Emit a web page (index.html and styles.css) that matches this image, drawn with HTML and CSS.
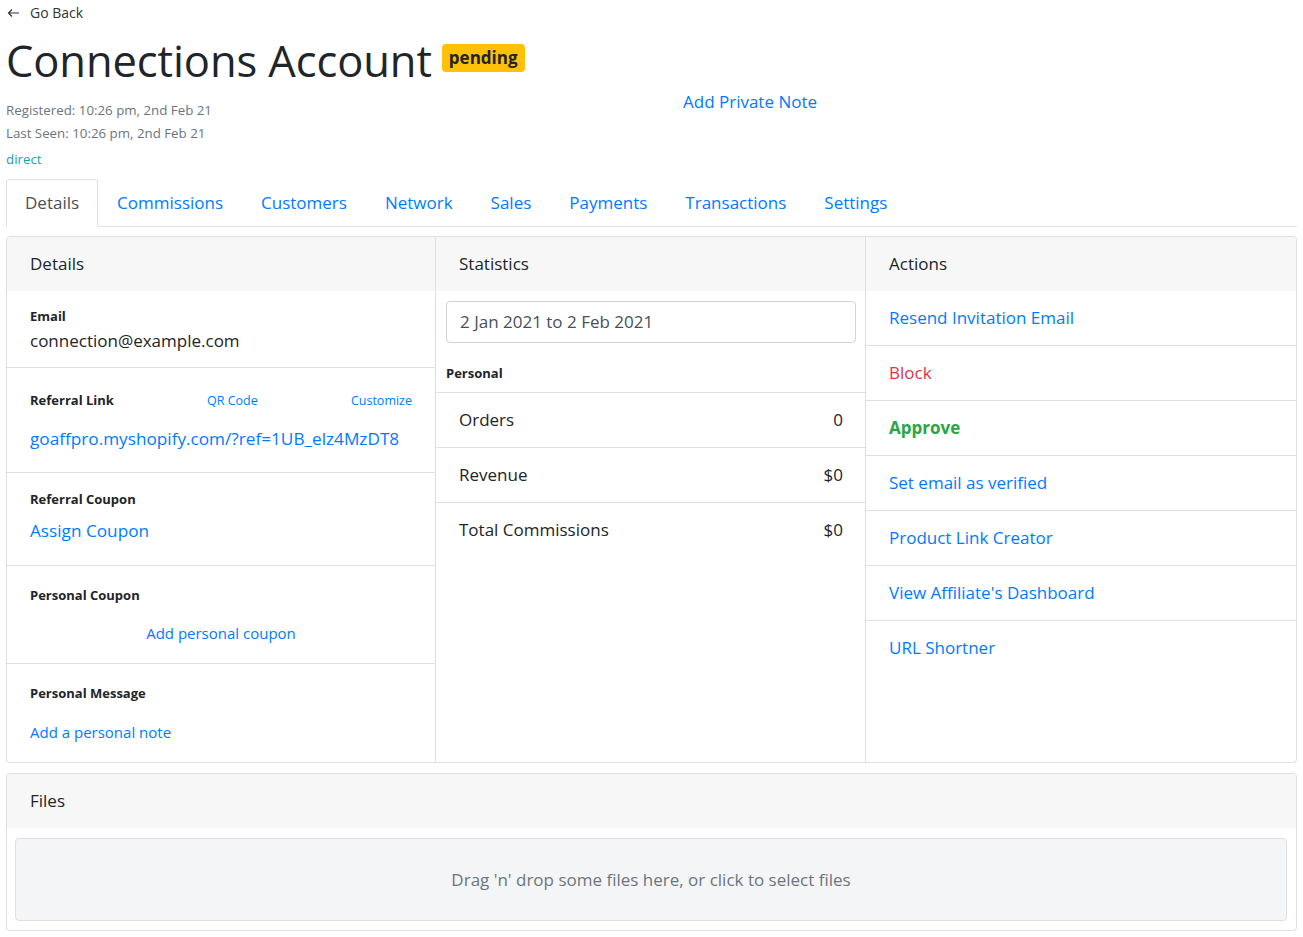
FILE: index.html
```html
<!DOCTYPE html>
<html lang="en">
<head>
<meta charset="utf-8">
<title>Connections Account</title>
<link rel="stylesheet" href="styles.css">
</head>
<body>
<div class="page">
  <a class="go-back" href="#">
    <svg class="arrow" width="13" height="10" viewBox="0 0 13 10" aria-hidden="true"><path d="M12 5H1.5M5 1.5L1.5 5L5 8.5" fill="none" stroke="#333" stroke-width="1.2"/></svg>
    <span>Go Back</span>
  </a>

  <div class="header">
    <div class="header-left">
      <div class="title-row">
        <h1 class="title">Connections Account</h1>
        <span class="badge">pending</span>
      </div>
      <div class="meta">Registered: 10:26 pm, 2nd Feb 21</div>
      <div class="meta">Last Seen: 10:26 pm, 2nd Feb 21</div>
      <div class="source">direct</div>
    </div>
    <a class="private-note" href="#">Add Private Note</a>
  </div>

  <nav class="tabs">
    <a class="tab active" href="#">Details</a>
    <a class="tab" href="#">Commissions</a>
    <a class="tab" href="#">Customers</a>
    <a class="tab" href="#">Network</a>
    <a class="tab" href="#">Sales</a>
    <a class="tab" href="#">Payments</a>
    <a class="tab" href="#">Transactions</a>
    <a class="tab" href="#">Settings</a>
  </nav>

  <div class="card-group">
    <section class="col">
      <div class="card-header">Details</div>
      <div class="item item-email">
        <div class="label">Email</div>
        <div class="value">connection@example.com</div>
      </div>
      <div class="item item-ref">
        <div class="label-row">
          <span class="label">Referral Link</span>
          <a class="small-link" href="#">QR Code</a>
          <a class="small-link" href="#">Customize</a>
        </div>
        <a class="big-link" href="#">goaffpro.myshopify.com/?ref=1UB_elz4MzDT8</a>
      </div>
      <div class="item item-coupon">
        <div class="label">Referral Coupon</div>
        <a class="big-link" href="#">Assign Coupon</a>
      </div>
      <div class="item item-pcoupon">
        <div class="label">Personal Coupon</div>
        <div class="center"><a class="mid-link" href="#">Add personal coupon</a></div>
      </div>
      <div class="item item-msg last">
        <div class="label">Personal Message</div>
        <a class="mid-link" href="#">Add a personal note</a>
      </div>
    </section>

    <section class="col">
      <div class="card-header">Statistics</div>
      <div class="date-input">2 Jan 2021 to 2 Feb 2021</div>
      <div class="stat-title">Personal</div>
      <div class="stats">
        <div class="stat-row"><span>Orders</span><span>0</span></div>
        <div class="stat-row"><span>Revenue</span><span>$0</span></div>
        <div class="stat-row last"><span>Total Commissions</span><span>$0</span></div>
      </div>
    </section>

    <section class="col">
      <div class="card-header">Actions</div>
      <a class="action" href="#">Resend Invitation Email</a>
      <a class="action danger" href="#">Block</a>
      <a class="action success" href="#">Approve</a>
      <a class="action" href="#">Set email as verified</a>
      <a class="action" href="#">Product Link Creator</a>
      <a class="action" href="#">View Affiliate's Dashboard</a>
      <a class="action last" href="#">URL Shortner</a>
    </section>
  </div>

  <section class="files-card">
    <div class="card-header">Files</div>
    <div class="dropzone">Drag 'n' drop some files here, or click to select files</div>
  </section>
</div>
</body>
</html>
```

FILE: styles.css
```css
* { box-sizing: border-box; }
html, body { margin: 0; padding: 0; background: #fff; }
body {
  font-family: "Open Sans", "Noto Sans", "Liberation Sans", sans-serif;
  color: #212529;
}
a { text-decoration: none; color: #007bff; }
.page { padding: 0 6px; }

.go-back {
  display: flex;
  align-items: center;
  height: 25px;
  color: #333;
  font-size: 14px;
}
.go-back .arrow { margin: 1px 10px 0 1px; }

.header { display: flex; align-items: center; }
.header-left { flex: 0 0 677px; padding-top: 10px; }
.title-row { display: flex; align-items: flex-start; height: 64px; }
.title {
  margin: 0;
  font-size: 43.5px;
  font-weight: 400;
  line-height: 52px;
  letter-spacing: -0.1px;
}
.badge {
  margin: 9px 0 0 10px;
  background: #ffc107;
  color: #212529;
  font-weight: 700;
  font-size: 17px;
  line-height: 28px;
  padding: 0 7px;
  border-radius: 4px;
}
.meta { font-size: 13.3px; line-height: 23px; color: #6c757d; }
.source { font-size: 13.3px; line-height: 24px; color: #17a2b8; padding-top: 2px; }
.private-note { font-size: 17px; line-height: 24px; margin-top: 8px; }

.tabs {
  display: flex;
  margin-top: 8px;
  border-bottom: 1px solid #dee2e6;
}
.tab {
  font-size: 17px;
  line-height: 28px;
  padding: 9px 18px;
  border: 1px solid transparent;
  border-radius: 4px 4px 0 0;
  margin-bottom: -1px;
}
.tab.active { color: #495057; border-color: #dee2e6 #dee2e6 #fff; background: #fff; }

.card-group {
  margin-top: 9px;
  display: grid;
  grid-template-columns: 428px 430px 1fr;
  border: 1px solid #dfdfdf;
  border-radius: 4px;
  overflow: hidden;
}
.col + .col { border-left: 1px solid #dfdfdf; }
.card-header {
  background: #f7f7f7;
  height: 54px;
  line-height: 54px;
  padding: 0 23px;
  font-size: 17px;
}

.item { padding: 0 23px; border-bottom: 1px solid #dfdfdf; }
.item.last { border-bottom: 0; }
.label { font-size: 13px; font-weight: 700; line-height: 21px; }
.value { font-size: 17px; line-height: 27px; }
.item-email { padding-top: 15px; padding-bottom: 13px; }
.item-ref { padding-top: 22px; padding-bottom: 20px; }
.label-row { display: flex; justify-content: space-between; align-items: center; margin-bottom: 14px; }
.small-link { font-size: 12.5px; line-height: 21px; }
.big-link { display: block; font-size: 17.2px; line-height: 27px; }
.item-coupon { padding-top: 16px; padding-bottom: 21px; }
.item-coupon .label { margin-bottom: 7px; }
.mid-link { display: inline-block; font-size: 15px; line-height: 24px; }
.item-pcoupon { padding-top: 19px; padding-bottom: 18px; }
.item-pcoupon .label { margin-bottom: 15px; }
.item-msg .label { margin-bottom: 16px; }
.center { text-align: center; }
.item-msg { padding-top: 19px; padding-bottom: 18px; }

.date-input {
  margin: 10px 9px 0 10px;
  height: 42px;
  border: 1px solid #ced4da;
  border-radius: 4px;
  padding: 0 13px;
  line-height: 40px;
  font-size: 17px;
  color: #495057;
}
.stat-title { font-size: 13px; font-weight: 700; line-height: 21px; padding: 20px 10px 0; margin-bottom: 8px; }
.stats { border-top: 1px solid #dfdfdf; }
.stat-row {
  display: flex;
  justify-content: space-between;
  padding: 13px 22px 14px 23px;
  font-size: 17px;
  line-height: 27px;
  border-bottom: 1px solid #dfdfdf;
}
.stat-row.last { border-bottom: 0; }

.action {
  display: block;
  padding: 13px 23px 14px;
  font-size: 17px;
  line-height: 27px;
  border-bottom: 1px solid #dfdfdf;
}
.action.last { border-bottom: 0; }
.action.danger { color: #dc3545; }
.action.success { color: #28a745; font-weight: 700; }

.files-card {
  margin-top: 10px;
  border: 1px solid #dfdfdf;
  border-radius: 4px;
  overflow: hidden;
  padding-bottom: 9px;
}
.dropzone {
  margin: 10px 9px 0 8px;
  height: 83px;
  background: #f4f5f7;
  border: 1px solid #dcdfe4;
  border-radius: 4px;
  text-align: center;
  line-height: 81px;
  font-size: 17px;
  color: #6c757d;
}
```
